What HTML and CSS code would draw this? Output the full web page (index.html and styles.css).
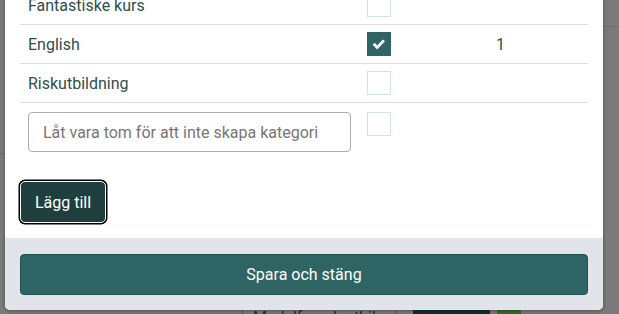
FILE: index.html
```html
<!DOCTYPE html>
<html lang="sv">
<head>
<meta charset="utf-8">
<link rel="stylesheet" href="styles.css">
</head>
<body>
<div class="backdrop">
  <div class="bg-line bg-line-right"></div>
  <div class="bg-line bg-line-left"></div>
  <div class="bg-row">
    <div class="bg-cell">Medelfung lastbil</div>
    <div class="bg-btn"></div>
    <div class="bg-green"></div>
  </div>
</div>
<div class="modal">
  <div class="modal-body">
    <div class="table">
      <div class="row">
        <div class="name">Fantastiske kurs</div>
        <div class="check-cell"><span class="box"></span></div>
        <div class="count"></div>
      </div>
      <div class="row">
        <div class="name">English</div>
        <div class="check-cell"><span class="box checked"><svg viewBox="0 0 24 24" width="24" height="24"><path d="M7.6 12.8l2.6 2.6 5.8-6" fill="none" stroke="#fff" stroke-width="2.8" stroke-linecap="square"/></svg></span></div>
        <div class="count">1</div>
      </div>
      <div class="row">
        <div class="name">Riskutbildning</div>
        <div class="check-cell"><span class="box"></span></div>
        <div class="count"></div>
      </div>
      <div class="row row-new">
        <div class="name"><input class="text-input" type="text" placeholder="Låt vara tom för att inte skapa kategori"></div>
        <div class="check-cell top"><span class="box"></span></div>
        <div class="count"></div>
      </div>
    </div>
    <button class="btn-add">Lägg till</button>
  </div>
  <div class="modal-footer">
    <button class="btn-save">Spara och stäng</button>
  </div>
</div>
</body>
</html>
```
FILE: styles.css
```css
* { box-sizing: border-box; }
html, body {
  margin: 0;
  padding: 0;
  height: 314px;
  overflow: hidden;
}
body {
  background: #7b7b7b;
  font-family: Roboto, "Liberation Sans", sans-serif;
  position: relative;
}
.backdrop {
  position: absolute;
  inset: 0;
  z-index: 0;
  overflow: hidden;
}
.bg-line {
  position: absolute;
  height: 1px;
  background: #6c6c6c;
}
.bg-line-right { left: 603px; right: 0; top: 26px; }
.bg-line-left { left: 0; width: 5px; top: 153px; }
.bg-row {
  position: absolute;
  left: 242px;
  top: 300px;
  height: 14px;
  display: flex;
  align-items: flex-start;
  overflow: hidden;
}
.bg-cell {
  width: 154px;
  height: 14px;
  border-left: 1px solid #5a5a5a;
  border-right: 1px solid #5a5a5a;
  padding: 8px 0 0 10px;
  color: #2b2b2b;
  font-size: 16px;
  line-height: 20px;
  overflow: hidden;
}
.bg-btn {
  margin-left: 17px;
  width: 77px;
  height: 14px;
  background: #163030;
}
.bg-green {
  margin-left: 7px;
  width: 24px;
  height: 14px;
  background: #3c6a2e;
}
.modal {
  position: relative;
  z-index: 1;
  margin: -14px 16px 0 5px;
  background: #fff;
  border-radius: 0 0 5px 5px;
  overflow: hidden;
  box-shadow: 0 1px 4px rgba(0,0,0,0.35);
}
.modal-body {
  padding: 0 15px 15px;
}
.row {
  display: grid;
  grid-template-columns: 339px 129px 1fr;
  height: 39px;
  border-bottom: 1px solid #dcdcdc;
  align-items: center;
  color: #2f4d4d;
  font-size: 16px;
}
.name { padding-left: 8px; }
.check-cell { padding-left: 8px; display: flex; }
.count { padding-left: 8px; }
.row-new {
  height: auto;
  border-bottom: none;
  align-items: start;
  padding: 9px 0 8px;
}
.box {
  width: 24px;
  height: 24px;
  border: 1px solid #cfe4e8;
  background: #fff;
  display: block;
  position: relative;
}
.box.checked {
  background: #2e6464;
  border-color: #2e6464;
}
.box.checked svg {
  position: absolute;
  left: -1px;
  top: -1px;
}
.text-input {
  width: 323px;
  height: 40px;
  border: 1px solid #ababab;
  border-radius: 4px;
  padding: 0 14px;
  font-family: inherit;
  font-size: 16px;
  color: #333;
  outline: none;
}
.text-input::placeholder { color: #767676; }
.btn-add {
  margin-top: 21px;
  display: block;
  height: 42px;
  width: 86px;
  background: #1f3e3e;
  color: #fff;
  font-family: inherit;
  font-size: 16px;
  border: 1px solid #fff;
  border-radius: 5px;
  box-shadow: 0 0 0 1.5px #000;
  padding: 0;
}
.modal-footer {
  background: #e1e4e8;
  padding: 16px 15px 15px;
}
.btn-save {
  display: block;
  width: 100%;
  height: 41px;
  background: #2e6464;
  border: 1px solid #234f4f;
  border-radius: 4px;
  color: #fff;
  font-family: inherit;
  font-size: 16px;
}
```
